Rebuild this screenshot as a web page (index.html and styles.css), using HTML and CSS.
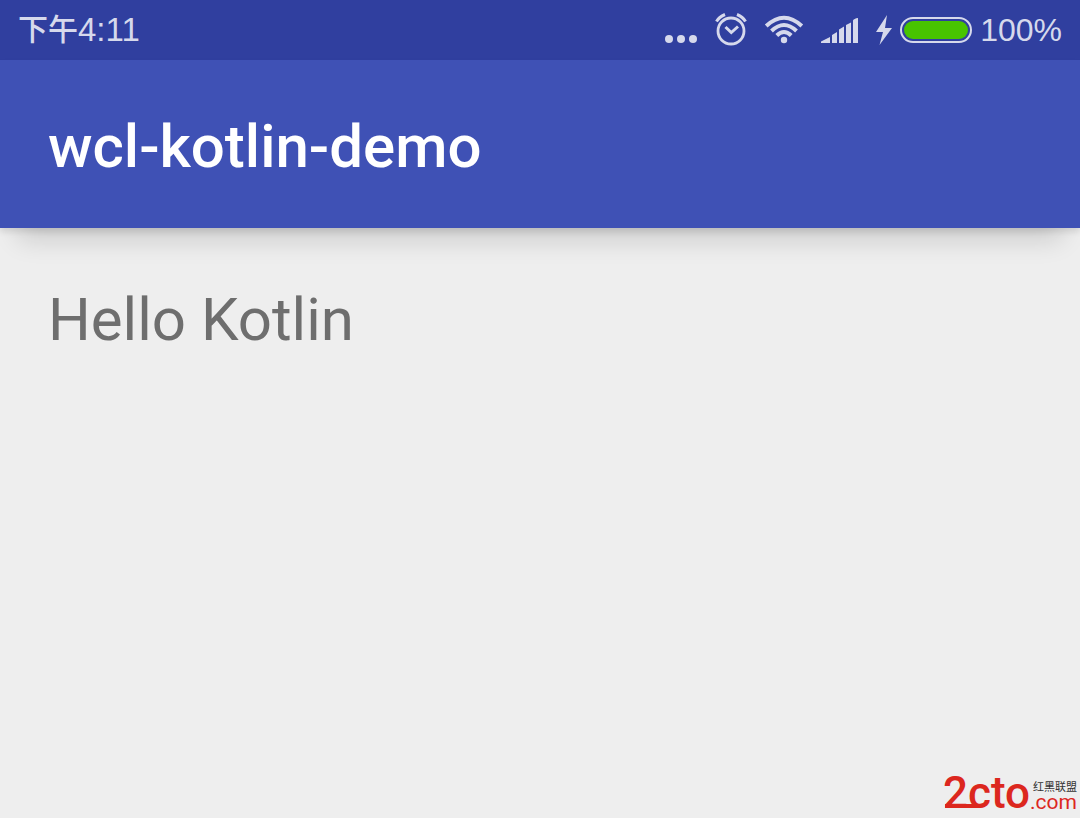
FILE: index.html
```html
<!DOCTYPE html>
<html lang="zh-CN">
<head>
<meta charset="utf-8">
<title>wcl-kotlin-demo</title>
<link rel="stylesheet" href="styles.css">
</head>
<body>
<div class="status-bar">
  <div class="clock"><span class="clock-period">下午</span><span class="clock-time">4:11</span></div>
  <div class="indicators">
    <svg class="icon" width="34" height="60" viewBox="0 0 34 60" aria-hidden="true">
      <circle cx="5" cy="39" r="4"/><circle cx="17" cy="39" r="4"/><circle cx="29" cy="39" r="4"/>
    </svg>
    <svg class="icon icon-alarm" width="34" height="60" viewBox="0 0 34 60" aria-hidden="true">
      <g class="stroked">
        <circle cx="17" cy="31" r="13" stroke-width="2.800"/>
        <path d="M11.500 27L17.300 32.500L24 26.500" stroke-width="3"/>
        <path d="M2.500 21.500Q5 17 11 14.500M31.500 21.500Q29 17 23 14.500" stroke-width="3"/>
      </g>
    </svg>
    <svg class="icon icon-wifi" width="40" height="60" viewBox="0 0 40 60" aria-hidden="true">
      <g class="stroked">
        <path d="M2.200 26Q20 9.500 37.800 26" stroke-width="4"/>
        <path d="M7.500 31Q20 19 32.500 31" stroke-width="4"/>
        <path d="M12.800 35.500Q20 28.500 27.200 35.500" stroke-width="4"/>
      </g>
      <circle cx="20" cy="40" r="3.200"/>
    </svg>
    <svg class="icon icon-signal" width="38" height="60" viewBox="0 0 38 60" aria-hidden="true">
      <path d="M0 43V41.500L9 37V43ZM11 43V35L16 32V43ZM18 43V29.500L23 26.500V43ZM25 43V25L30 22.500V43ZM32 43V20.500Q33 18.500 37 18V43Z"/>
    </svg>
    <svg class="icon icon-bolt" width="18" height="60" viewBox="0 0 18 60" aria-hidden="true">
      <path d="M12 15L1 32H8L4.500 45L17 28H10Z"/>
    </svg>
    <div class="battery"><div class="battery-level"></div></div>
    <span class="percent">100%</span>
  </div>
</div>
<header class="app-bar">
  <h1 class="title">wcl-kotlin-demo</h1>
</header>
<main class="content">
  <p class="greeting">Hello Kotlin</p>
</main>
<div class="watermark">
  <span class="brand">2cto</span>
  <div class="brand-side">
    <span class="brand-name">红黑联盟</span>
    <span class="brand-domain">.com</span>
  </div>
</div>
</body>
</html>
```
FILE: styles.css
```css
* {
  box-sizing: border-box;
}

body {
  display: flex;
  flex-direction: column;
  min-height: 100vh;
  margin: 0;
  overflow-x: hidden;
  background: #eeeeee;
  font-family: Roboto, "Noto Sans CJK SC", sans-serif;
}

.status-bar {
  display: flex;
  justify-content: space-between;
  align-items: center;
  height: 60px;
  padding: 0 18px;
  background: #303f9f;
  color: #d6d9ec;
  font-family: "Liberation Sans", "Noto Sans CJK SC", sans-serif;
  font-size: 32px;
  line-height: 60px;
}

.clock {
  display: flex;
}

.clock-period {
  font-size: 30px;
  font-weight: 500;
}

.clock-time {
  font-size: 33px;
}

.indicators {
  display: flex;
  align-items: center;
}

.icon {
  display: block;
  fill: #d6d9ec;
}

.stroked {
  fill: none;
  stroke: #d6d9ec;
}

.icon-alarm {
  margin-left: 16px;
}

.icon-wifi {
  margin-left: 16px;
}

.icon-signal {
  margin-left: 17px;
}

.icon-bolt {
  margin-left: 16px;
}

.battery {
  width: 72px;
  height: 26px;
  margin: 0 8px 0 7px;
  padding: 2px;
  border: 2px solid #d6d9ec;
  border-radius: 13px;
}

.battery-level {
  height: 100%;
  border-radius: 9px;
  background: #48c400;
}

.app-bar {
  padding: 51px 48px 45px;
  background: #3f51b5;
  box-shadow: 0 4px 6px rgba(0, 0, 0, 0.1), 0 30px 24px -18px rgba(0, 0, 0, 0.14);
}

.title {
  margin: 0;
  color: #ffffff;
  font-size: 60px;
  font-weight: 500;
  line-height: 72px;
}

.content {
  flex: 1;
  padding: 56px 48px;
}

.greeting {
  margin: 0;
  color: #6e6e6e;
  font-size: 60px;
  line-height: 72px;
}

.watermark {
  display: flex;
  align-items: flex-end;
  align-self: flex-end;
  padding: 0 3px 8px 0;
  color: #dc271e;
}

.brand {
  position: relative;
  font-size: 44px;
  font-weight: 500;
  line-height: 34px;
}

/* Bar that joins the feet of the first two characters. */
.brand::after {
  content: "";
  position: absolute;
  bottom: 2px;
  left: 2px;
  width: 36px;
  height: 4px;
  background: #dc271e;
}

.brand-side {
  display: flex;
  flex-direction: column;
  align-items: flex-end;
}

.brand-name {
  color: #333333;
  font-size: 11px;
  line-height: 12px;
}

.brand-domain {
  font-size: 21px;
  line-height: 16px;
}
```
